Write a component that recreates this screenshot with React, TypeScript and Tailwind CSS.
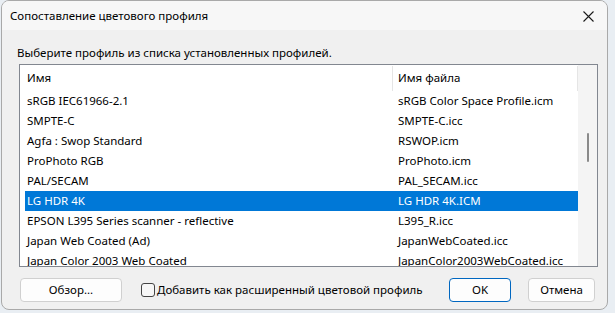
import React from "react";

const ROWS: [string, string][] = [
  ["sRGB IEC61966-2.1", "sRGB Color Space Profile.icm"],
  ["SMPTE-C", "SMPTE-C.icc"],
  ["Agfa : Swop Standard", "RSWOP.icm"],
  ["ProPhoto RGB", "ProPhoto.icm"],
  ["PAL/SECAM", "PAL_SECAM.icc"],
  ["LG HDR 4K", "LG HDR 4K.ICM"],
  ["EPSON L395 Series scanner - reflective", "L395_R.icc"],
  ["Japan Web Coated (Ad)", "JapanWebCoated.icc"],
  ["Japan Color 2003 Web Coated", "JapanColor2003WebCoated.icc"],
];

const SELECTED = 5;

function CloseIcon() {
  return (
    <svg width="11" height="11" viewBox="0 0 11 11" fill="none">
      <path d="M0.5 0.5 L10.5 10.5 M10.5 0.5 L0.5 10.5" stroke="#1a1a1a" strokeWidth="1.1" />
    </svg>
  );
}

export default function App() {
  return (
    <div
      className="h-[313px] w-[615px] overflow-hidden bg-[#e9eef3] text-[11.5px] text-black"
      style={{ fontFamily: '"Segoe UI", "Noto Sans", sans-serif' }}
    >
      <div className="ml-[1px] flex h-[310px] w-[607px] flex-col overflow-hidden rounded-[8px] border border-[#a9a9a9] bg-[#f0f0f0]">
        <div className="flex h-[29px] shrink-0 items-center justify-between bg-[#f7f7f7] pl-[8px] pr-[4px] pt-[1px]">
          <span>Сопоставление цветового профиля</span>
          <div className="flex h-[28px] w-[30px] items-center justify-center">
            <CloseIcon />
          </div>
        </div>

        <div className="pl-[15px] pt-[15px] leading-[16px]">Выберите профиль из списка установленных профилей.</div>

        <div className="ml-[17px] mt-[3px] h-[203px] w-[579px] shrink-0 overflow-hidden border border-[#828790] bg-white">
          <div className="flex h-full">
            <div className="flex-1 overflow-hidden pl-[5px]">
              <div className="flex h-[25px] items-center pt-[1px]">
                <div className="w-[367px] pl-[2px]">Имя</div>
                <div className="h-[25px] w-px bg-[#e5e5e5]" />
                <div className="flex-1 pl-[5px]">Имя файла</div>
                <div className="h-[25px] w-px bg-[#e5e5e5]" />
              </div>
              <div className="h-px" />
              {ROWS.map(([name, file], i) => (
                <div
                  key={name}
                  className={
                    i === SELECTED
                      ? "flex h-[20px] items-center bg-[#0078d7] text-white"
                      : "flex h-[20px] items-center"
                  }
                >
                  <div className="w-[368px] whitespace-nowrap pl-[2px]">{name}</div>
                  <div className="flex-1 whitespace-nowrap pl-[5px]">{file}</div>
                </div>
              ))}
            </div>
            <div className="w-[19px] shrink-0 bg-[#f4f4f4] pl-[9px] pt-[68px]">
              <div className="h-[29px] w-[2px] rounded-full bg-[#8a8a8a]" />
            </div>
          </div>
        </div>

        <div className="mt-[11px] flex items-center pl-[18px]">
          <button className="h-[24px] w-[102px] rounded-[4px] border border-[#d0d0d0] bg-[#fdfdfd]">
            Обзор...
          </button>
          <label className="ml-[19px] flex items-center">
            <span className="h-[14px] w-[14px] rounded-[3px] border border-[#444] bg-[#f7f7f7]" />
            <span className="ml-[2px]">Добавить как расширенный цветовой профиль</span>
          </label>
          <button className="ml-auto h-[24px] w-[62px] rounded-[4px] border border-[#0067c0] bg-[#fdfdfd]">
            OK
          </button>
          <button className="ml-[17px] mr-[12px] h-[24px] w-[67px] rounded-[4px] border border-[#d0d0d0] bg-[#fdfdfd]">
            Отмена
          </button>
        </div>
      </div>
    </div>
  );
}
